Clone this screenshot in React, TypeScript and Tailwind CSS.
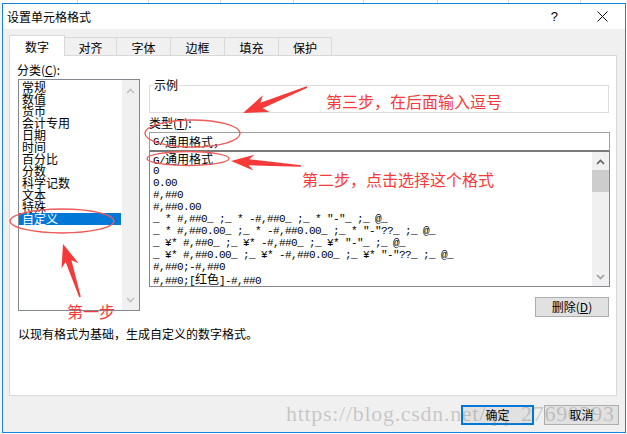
import React from "react";

type Pt = [number, number];

function arrowPoints(t: Pt, p: Pt, headLen: number, headHalf: number, shaftHalf: number, tailHalf: number): string {
  const dx = p[0] - t[0];
  const dy = p[1] - t[1];
  const len = Math.hypot(dx, dy);
  const ux = dx / len;
  const uy = dy / len;
  const nx = -uy;
  const ny = ux;
  const bx = p[0] - ux * headLen;
  const by = p[1] - uy * headLen;
  const back = 3;
  const pts: Pt[] = [
    [t[0] + nx * tailHalf, t[1] + ny * tailHalf],
    [bx + ux * 2 + nx * shaftHalf, by + uy * 2 + ny * shaftHalf],
    [bx - ux * back + nx * headHalf, by - uy * back + ny * headHalf],
    [p[0], p[1]],
    [bx - ux * back - nx * headHalf, by - uy * back - ny * headHalf],
    [bx + ux * 2 - nx * shaftHalf, by + uy * 2 - ny * shaftHalf],
    [t[0] - nx * tailHalf, t[1] - ny * tailHalf],
  ];
  return pts.map((q) => `${q[0].toFixed(1)},${q[1].toFixed(1)}`).join(" ");
}

function MixedText({ text }: { text: string }) {
  const parts = text.split(/([\u4e00-\u9fff\uff0c\uff1a]+)/);
  return (
    <>
      {parts.map((s, i) =>
        /[\u4e00-\u9fff\uff0c\uff1a]/.test(s) ? (
          <span key={i} className="text-[12px] tracking-normal font-['Noto_Sans_CJK_SC',sans-serif]">
            {s}
          </span>
        ) : (
          <span key={i}>{s}</span>
        )
      )}
    </>
  );
}

function Chevron({ up, color }: { up: boolean; color: string }) {
  return (
    <svg width="9" height="6" viewBox="0 0 9 6">
      <polyline
        points={up ? "1,5 4.5,1.5 8,5" : "1,1 4.5,4.5 8,1"}
        fill="none"
        stroke={color}
        strokeWidth="1.6"
      />
    </svg>
  );
}

const categories = ["常规", "数值", "货币", "会计专用", "日期", "时间", "百分比", "分数", "科学记数", "文本", "特殊", "自定义"];

const formats = [
  "G/通用格式",
  "0",
  "0.00",
  "#,##0",
  "#,##0.00",
  '_ * #,##0_ ;_ * -#,##0_ ;_ * "-"_ ;_ @_',
  '_ * #,##0.00_ ;_ * -#,##0.00_ ;_ * "-"??_ ;_ @_',
  '_ ¥* #,##0_ ;_ ¥* -#,##0_ ;_ ¥* "-"_ ;_ @_',
  '_ ¥* #,##0.00_ ;_ ¥* -#,##0.00_ ;_ ¥* "-"??_ ;_ @_',
  "#,##0;-#,##0",
  "#,##0;[红色]-#,##0",
];

const tabs = [
  { label: "对齐", w: "w-[52px]" },
  { label: "字体", w: "w-[54px]" },
  { label: "边框", w: "w-[54px]" },
  { label: "填充", w: "w-[54px]" },
  { label: "保护", w: "w-[53px]" },
];

export default function App() {
  const red = "#f63a3a";
  return (
    <div className="relative w-[627px] h-[434px] overflow-hidden bg-white text-[12px] text-black font-['Noto_Sans_CJK_SC','Noto_Sans',sans-serif]">
      {/* Excel grid strip behind the dialog */}
      <div className="flex h-[3px]">
        <div className="w-[78px] border-r border-[#d6d6d6]" />
        <div className="w-[71px] border-r border-[#d6d6d6]" />
        <div className="w-[72px] border-r border-[#d6d6d6]" />
        <div className="w-[73px] border-r border-[#d6d6d6]" />
        <div className="w-[70px] border-r border-[#d6d6d6]" />
        <div className="w-[74px] border-r border-[#d6d6d6]" />
        <div className="w-[71px] border-r border-[#d6d6d6]" />
        <div className="w-[72px] border-r border-[#d6d6d6]" />
      </div>

      <div className="flex">
        <div className="w-[2px] bg-[#f3f3f3]" />
        {/* Dialog window */}
        <div className="w-[624px] h-[430px] border border-[#1883d7] flex flex-col">
          {/* Title bar */}
          <div className="h-[25px] bg-white flex items-center">
            <div className="pl-[4px] text-[12px] leading-[14px]">设置单元格格式</div>
            <div className="ml-auto flex items-center">
              <div className="text-[13px] leading-[14px] font-['Liberation_Sans',sans-serif] mr-[39px]">?</div>
              <svg width="11" height="11" viewBox="0 0 11 11" className="mr-[17px]">
                <line x1="0.5" y1="0.5" x2="10.5" y2="10.5" stroke="#111" strokeWidth="1" />
                <line x1="10.5" y1="0.5" x2="0.5" y2="10.5" stroke="#111" strokeWidth="1" />
              </svg>
            </div>
          </div>

          {/* Body */}
          <div className="flex-1 bg-[#f0f0f0] flex flex-col pt-[6px]">
            {/* Tabs */}
            <div className="flex items-end pl-[6px]">
              <div className="relative z-10 -mb-px w-[56px] h-[21px] bg-white border-x border-t border-[#d9d9d9] flex items-center justify-center pt-[2px] leading-[12px]">
                数字
              </div>
              {tabs.map((t) => (
                <div
                  key={t.label}
                  className={`${t.w} h-[18px] border-t border-r border-[#d9d9d9] flex items-center justify-center pt-[2px] leading-[12px]`}
                >
                  {t.label}
                </div>
              ))}
            </div>

            {/* Panel */}
            <div className="ml-[6px] w-[608px] h-[341px] border border-[#d9d9d9] bg-white flex flex-col">
              <div className="flex pl-[8px] pt-[8px]">
                {/* Left column */}
                <div className="w-[122px] flex flex-col">
                  <div className="-ml-px h-[12px] leading-[12px]">
                    分类(<span className="underline">C</span>):
                  </div>
                  <div className="mt-[3px] h-[232px] border border-[#828790] flex">
                    <div className="flex-1 pt-px flex flex-col">
                      {categories.map((c, i) => (
                        <div
                          key={c}
                          className={
                            i === categories.length - 1
                              ? "h-[12px] leading-[12px] pl-[3px] mr-px bg-[#0078d7] text-white"
                              : "h-[12px] leading-[12px] pl-[3px]"
                          }
                        >
                          {c}
                        </div>
                      ))}
                    </div>
                    <div className="w-[17px] bg-[#f0f0f0] flex flex-col items-center justify-between pt-[8px] pb-[7px]">
                      <Chevron up color="#c2c2c2" />
                      <Chevron up={false} color="#c2c2c2" />
                    </div>
                  </div>
                </div>

                {/* Right column */}
                <div className="ml-[9px] w-[461px] flex flex-col">
                  <div className="relative mt-[21px] mr-px h-[28px] border border-[#dcdcdc]">
                    <div className="absolute left-[3px] top-[-7px] bg-white px-px leading-[12px]">示例</div>
                  </div>
                  <div className="mt-[4px] h-[12px] leading-[12px]">
                    类型(<span className="underline">T</span>):
                  </div>
                  <div className="mt-[3px] h-[19px] border border-[#a0a0a0] border-b-[#7a7a7a] flex items-center pl-[3px] whitespace-pre text-[11px] tracking-[-0.6px] leading-[12px] font-['Liberation_Mono','Noto_Sans_CJK_SC',monospace]">
                    <MixedText text="G/通用格式，" />
                  </div>
                  <div className="h-[136px] border border-[#828790] border-t-[#7a7a7a] flex">
                    <div className="flex-1 pt-px pl-[3px] flex flex-col whitespace-pre text-[11px] tracking-[-0.6px] font-['Liberation_Mono','Noto_Sans_CJK_SC',monospace]">
                      {formats.map((f) => (
                        <div key={f} className="h-[12px] leading-[12px]">
                          <MixedText text={f} />
                        </div>
                      ))}
                    </div>
                    <div className="w-[17px] bg-[#f0f0f0] flex flex-col">
                      <div className="h-[17px] flex items-center justify-center pt-[2px]">
                        <Chevron up color="#606060" />
                      </div>
                      <div className="mt-px h-[22px] bg-[#cdcdcd]" />
                      <div className="mt-auto h-[17px] flex items-center justify-center pb-px">
                        <Chevron up={false} color="#a0a0a0" />
                      </div>
                    </div>
                  </div>
                  <div className="mt-[10px] self-end mr-px w-[74px] h-[20px] bg-[#e1e1e1] border border-[#adadad] flex items-center justify-center leading-[12px]">
                    删除(<span className="underline">D</span>)
                  </div>
                </div>
              </div>
              <div className="mt-[9px] pl-[8px] leading-[16px]">以现有格式为基础，生成自定义的数字格式。</div>
            </div>

            {/* Buttons */}
            <div className="mt-[9px] flex justify-end gap-[10px] pr-[6px]">
              <div className="w-[73px] h-[20px] bg-[#e1e1e1] border-2 border-[#0078d7] flex items-center justify-center leading-[12px]">
                确定
              </div>
              <div className="w-[75px] h-[20px] bg-[#e1e1e1] border border-[#adadad] flex items-center justify-center leading-[12px]">
                取消
              </div>
            </div>
          </div>
        </div>
      </div>

      {/* Watermark */}
      <div className="pointer-events-none absolute left-[286px] top-[403px] whitespace-nowrap text-[22px] leading-[22px] tracking-[0.7px] text-[rgba(120,120,120,0.35)] font-['Liberation_Serif',serif]">
        https://blog.csdn.net/qq_27690393
      </div>

      {/* Red annotations */}
      <svg className="pointer-events-none absolute left-0 top-0" width="627" height="434" viewBox="0 0 627 434">
        <ellipse cx="62" cy="221" rx="52" ry="12" fill="none" stroke="#ef5a5a" strokeWidth="1.3" />
        <ellipse cx="192.5" cy="133.5" rx="47.5" ry="13.5" fill="none" stroke="#ef5a5a" strokeWidth="1.3" />
        <ellipse cx="188" cy="158.5" rx="41" ry="7" fill="none" stroke="#ef5a5a" strokeWidth="1.3" />
        <polygon points={arrowPoints([80, 297], [63, 244], 20, 9, 3, 0.8)} fill={red} />
        <polygon points={arrowPoints([301, 166], [231, 161], 20, 8, 3, 0.8)} fill={red} />
        <polygon points={arrowPoints([307, 87], [243, 113], 22, 9, 3, 0.8)} fill={red} />
      </svg>
      <div className="pointer-events-none absolute left-[326px] top-[93px] whitespace-nowrap text-[16px] leading-[16px] text-[#f63a3a]">
        第三步，在后面输入逗号
      </div>
      <div className="pointer-events-none absolute left-[302px] top-[171px] whitespace-nowrap text-[16px] leading-[16px] text-[#f63a3a]">
        第二步，点击选择这个格式
      </div>
      <div className="pointer-events-none absolute left-[67px] top-[303px] whitespace-nowrap text-[16px] leading-[16px] text-[#f63a3a]">
        第一步
      </div>
    </div>
  );
}
